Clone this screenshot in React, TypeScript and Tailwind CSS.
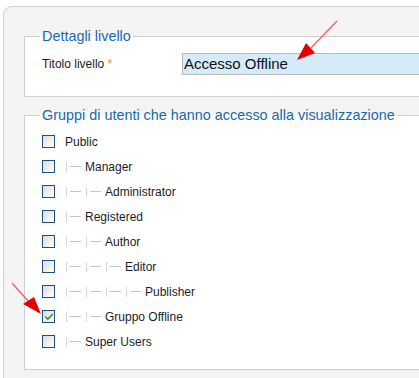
import { Check } from "lucide-react";

type Group = { name: string; level: number; checked?: boolean };

const groups: Group[] = [
  { name: "Public", level: 0 },
  { name: "Manager", level: 1 },
  { name: "Administrator", level: 2 },
  { name: "Registered", level: 1 },
  { name: "Author", level: 2 },
  { name: "Editor", level: 3 },
  { name: "Publisher", level: 4 },
  { name: "Gruppo Offline", level: 2, checked: true },
  { name: "Super Users", level: 1 },
];

const TreeStep = () => (
  <span className="flex items-center w-[20px] h-full shrink-0">
    <span className="ml-[1px] w-px h-[10px] bg-[#ddd0e2]" />
    <span className="ml-[3px] w-[11px] h-px bg-[#c4c4c4]" />
  </span>
);

const Box = ({ checked }: { checked?: boolean }) => (
  <span className="ml-[2px] flex items-center justify-center w-[13px] h-[13px] border border-[#1f4f7e] bg-gradient-to-br from-[#dcdcdc] to-white shrink-0">
    {checked && <Check className="w-[10px] h-[10px] text-[#2d9a2d]" strokeWidth={4} />}
  </span>
);

const Arrows = () => (
  <svg className="absolute inset-0 pointer-events-none" width="419" height="378">
    <line x1="337" y1="21" x2="309" y2="50" stroke="#ff5a5a" strokeWidth="1.3" />
    <polygon points="297,60 306,43 315,53" fill="#e30000" />
    <line x1="12" y1="283" x2="29" y2="302" stroke="#ff5a5a" strokeWidth="1.3" />
    <polygon points="41,314 23,304 34,297" fill="#e30000" />
  </svg>
);

export default function App() {
  return (
    <div className="relative w-[419px] h-[378px] overflow-hidden bg-white font-['Liberation_Sans',Arial,sans-serif]">
      <div className="ml-[3px] mt-[6px] w-[480px] h-[420px] rounded-tl-[9px] border border-[#cfcfcf] bg-[#f4f4f4] pl-[20px] pt-[21px]">
        <fieldset className="border border-[#cfcfcf] bg-white px-[15px] pb-[21px]">
          <legend className="px-[2px] text-[14.4px] leading-[16px] text-[#1868ad]">Dettagli livello</legend>
          <div className="flex items-center mt-[9px]">
            <label className="ml-[2px] w-[140px] text-[12px] text-[#1c1c28]">
              Titolo livello <span className="text-[#e88a3a]">*</span>
            </label>
            <div className="w-[260px] h-[22px] border border-[#b9b9b9] bg-[#d6ebfa] pl-[1px] flex items-center text-[15px] text-[#111]">
              Accesso Offline
            </div>
          </div>
        </fieldset>
        <fieldset className="mt-[10px] border border-[#cfcfcf] bg-white px-[15px] pb-[15px]">
          <legend className="px-[2px] text-[14.4px] leading-[16px] text-[#1868ad]">
            Gruppi di utenti che hanno accesso alla visualizzazione
          </legend>
          <ul className="mt-[6px]">
            {groups.map((g) => (
              <li key={g.name} className="flex items-center h-[25px] text-[12px] text-[#1c1c28]">
                <Box checked={g.checked} />
                <span className="flex items-center h-full ml-[10px]">
                  {Array.from({ length: g.level }).map((_, i) => (
                    <TreeStep key={i} />
                  ))}
                  <span>{g.name}</span>
                </span>
              </li>
            ))}
          </ul>
        </fieldset>
      </div>
      <Arrows />
    </div>
  );
}
